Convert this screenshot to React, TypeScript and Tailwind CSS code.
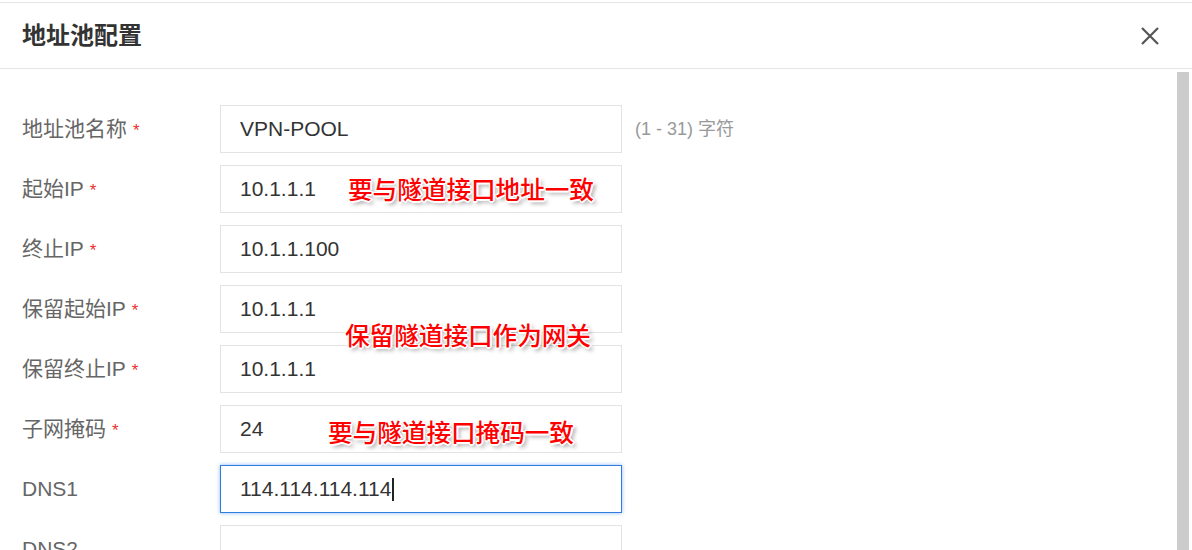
import React from "react";

type Row = {
  label: string;
  value: string;
  required?: boolean;
  hint?: string;
  focused?: boolean;
};

const rows: Row[] = [
  { label: "地址池名称", value: "VPN-POOL", required: true, hint: "(1 - 31) 字符" },
  { label: "起始IP", value: "10.1.1.1", required: true },
  { label: "终止IP", value: "10.1.1.100", required: true },
  { label: "保留起始IP", value: "10.1.1.1", required: true },
  { label: "保留终止IP", value: "10.1.1.1", required: true },
  { label: "子网掩码", value: "24", required: true },
  { label: "DNS1", value: "114.114.114.114", focused: true },
  { label: "DNS2", value: "" },
];

// red callouts pasted on top of the screenshot
const notes = [
  { text: "要与隧道接口地址一致", cls: "top-[103px] left-[348px]" },
  { text: "保留隧道接口作为网关", cls: "top-[249px] left-[345px]" },
  { text: "要与隧道接口掩码一致", cls: "top-[346px] left-[328px]" },
];

function FieldRow({ row }: { row: Row }) {
  return (
    <div className="flex h-[48px] items-center">
      <div className="w-[220px] pl-[22px] text-[21px] text-[#666]">
        {row.label}
        {row.required && <span className="ml-[6px] text-[17px] text-[#e8312f]">*</span>}
      </div>
      <div
        className={
          row.focused
            ? "flex h-[48px] w-[402px] items-center border border-[#2f7de1] px-[19px] text-[21px] text-[#333] shadow-[0_0_4px_rgba(47,125,225,0.55)]"
            : "flex h-[48px] w-[402px] items-center border border-[#e3e3e3] px-[19px] text-[21px] text-[#333]"
        }
      >
        <span>{row.value}</span>
        {row.focused && <span className="ml-px h-[23px] w-[2px] bg-[#222]" />}
      </div>
      {row.hint && <div className="ml-[13px] text-[18px] text-[#999]">{row.hint}</div>}
    </div>
  );
}

export default function App() {
  return (
    <div
      className="h-[550px] overflow-hidden bg-white pt-[2px]"
      style={{ fontFamily: '"Liberation Sans", "Noto Sans CJK SC", sans-serif' }}
    >
      <div className="flex h-[67px] items-center justify-between border-y border-[#e6e6e6] pl-[22px] pr-[32px]">
        <h1 className="text-[24px] font-bold text-[#333]">地址池配置</h1>
        <svg width="20" height="20" viewBox="0 0 20 20" className="text-[#555]">
          <path d="M2 2 L18 18 M18 2 L2 18" stroke="currentColor" strokeWidth="2.2" fill="none" />
        </svg>
      </div>

      <div className="flex">
        <div className="relative flex-1 pt-[36px]">
          <div className="flex flex-col gap-[12px]">
            {rows.map((r) => (
              <FieldRow key={r.label} row={r} />
            ))}
          </div>
          {notes.map((n) => (
            <div
              key={n.text}
              className={`absolute ${n.cls} text-[24.6px] font-medium leading-[32px] text-[#ff0000] [text-shadow:1px_1px_0_#fff,-1px_-1px_0_#fff,1px_-1px_0_#fff,-1px_1px_0_#fff,0_2px_0_#fff,2px_0_0_#fff,3px_3px_4px_rgba(0,0,0,0.45)]`}
              style={{ fontFamily: '"Noto Sans CJK SC", sans-serif' }}
            >
              {n.text}
            </div>
          ))}
        </div>
        <div className="w-[15px] pt-[3px]">
          <div className="h-[500px] w-[12px] bg-[#cccccc]" />
        </div>
      </div>
    </div>
  );
}
